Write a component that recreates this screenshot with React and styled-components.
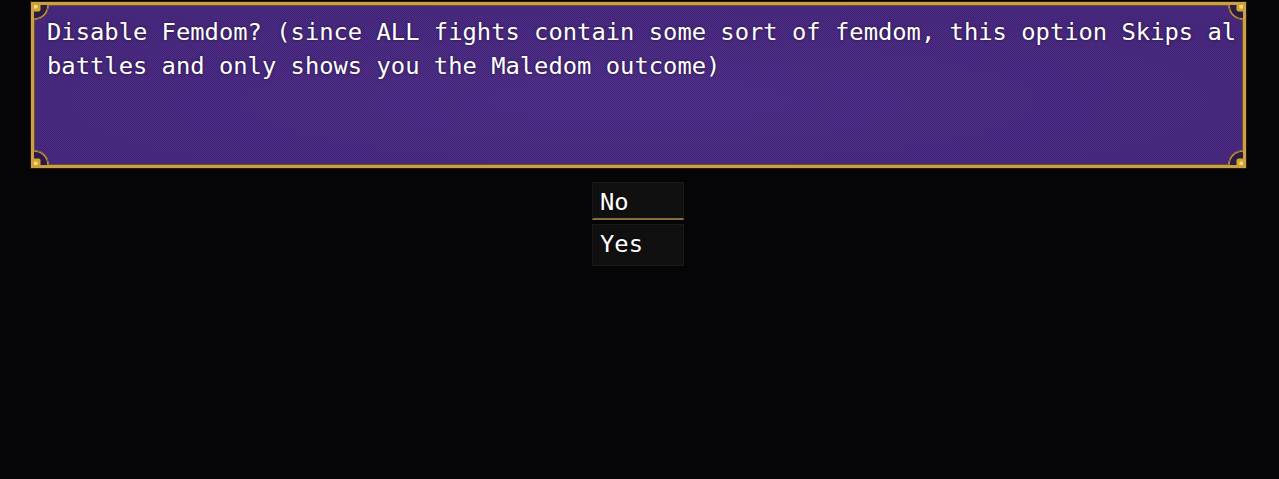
import React from "react";
import styled, { createGlobalStyle } from "styled-components";

const Global = createGlobalStyle`
  html, body { margin: 0; padding: 0; background: #050406; }
  body { width: 1279px; height: 479px; overflow: hidden; }
`;

const Screen = styled.div`
  width: 1279px;
  height: 479px;
  background: #050406;
  display: flex;
  flex-direction: column;
  align-items: flex-start;
  padding: 2px 0 0 31px;
  box-sizing: border-box;
  font-family: "DejaVu Sans Mono", "Liberation Mono", monospace;
`;

const MessageWindow = styled.div`
  position: relative;
  width: 1215px;
  height: 166px;
  box-sizing: border-box;
  border: 3px solid #c9a047;
  box-shadow: inset 0 0 0 1px #6f511c, 0 0 0 1px #2a1c08;
  background-color: #4b2c86;
  background-image:
    repeating-conic-gradient(rgba(30, 10, 60, 0.22) 0 25%, transparent 0 50%),
    radial-gradient(ellipse at 50% 60%, #51318c 0%, #4a2a83 80%);
  background-size: 2px 2px, 100% 100%;
  padding: 10px 0 0 13px;
  overflow: hidden;
`;

const MessageText = styled.div`
  color: #ffffff;
  font-size: 23.8px;
  line-height: 34px;
  white-space: pre;
  text-shadow: 0 0 3px rgba(0, 0, 0, 0.55);
`;

const CornerBox = styled.svg`
  position: absolute;
  width: 18px;
  height: 18px;
  ${(p) => (p.$v === "top" ? "top: -3px;" : "bottom: -3px;")}
  ${(p) => (p.$h === "left" ? "left: -3px;" : "right: -3px;")}
  transform: scale(${(p) => (p.$h === "left" ? 1 : -1)}, ${(p) => (p.$v === "top" ? 1 : -1)});
`;

function Corner({ v, h }) {
  return (
    <CornerBox $v={v} $h={h} viewBox="0 0 18 18">
      <path d="M0 0 H18 V3 H16 A13 13 0 0 1 3 16 V18 H0 Z" fill="#2c1b42" />
      <path d="M3.5 17 A13.5 13.5 0 0 0 17 3.5" fill="none" stroke="#c9a047" strokeWidth="1.6" />
      <path d="M5.5 17 A11.5 11.5 0 0 0 17 5.5" fill="none" stroke="#7a5c22" strokeWidth="1" />
      <path d="M0 0 H18 V3 H3 V18 H0 Z" fill="#c9a047" />
      <rect x="0.5" y="0.5" width="9" height="9" rx="2" fill="#d6a52c" />
      <rect x="2.5" y="2.5" width="4" height="4" rx="1.2" fill="#f8de6c" />
    </CornerBox>
  );
}

const ChoiceList = styled.div`
  align-self: center;
  margin: 14px 0 0 -34px;
  width: 92px;
  display: flex;
  flex-direction: column;
  gap: 4px;
`;

const ChoiceRow = styled.div`
  box-sizing: border-box;
  height: ${(p) => (p.$selected ? "38px" : "42px")};
  background: #111011;
  border: 1px solid #1b1a1b;
  border-bottom: ${(p) => (p.$selected ? "2px solid #87703f" : "1px solid #1b1a1b")};
  color: #ffffff;
  font-size: 23.8px;
  line-height: 34px;
  padding: 2px 0 0 7px;
  text-shadow: 0 0 3px rgba(0, 0, 0, 0.6);
`;

export default function App() {
  return (
    <Screen>
      <Global />
      <MessageWindow>
        <MessageText>
          {"Disable Femdom? (since ALL fights contain some sort of femdom, this option Skips al\nbattles and only shows you the Maledom outcome)"}
        </MessageText>
        <Corner v="top" h="left" />
        <Corner v="top" h="right" />
        <Corner v="bottom" h="left" />
        <Corner v="bottom" h="right" />
      </MessageWindow>
      <ChoiceList>
        <ChoiceRow $selected>No</ChoiceRow>
        <ChoiceRow>Yes</ChoiceRow>
      </ChoiceList>
    </Screen>
  );
}
